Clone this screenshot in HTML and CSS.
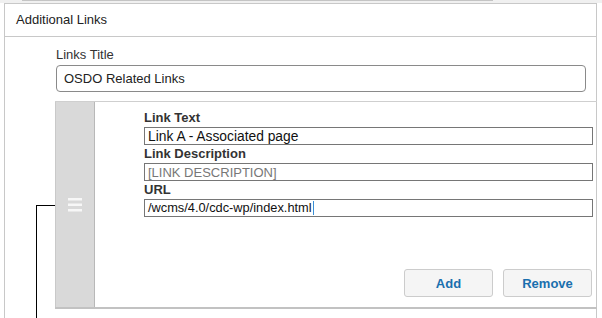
FILE: index.html
```html
<!DOCTYPE html>
<html>
<head>
<meta charset="utf-8">
<link rel="stylesheet" href="styles.css">
</head>
<body>
<div class="top-strip"><div class="top-line"></div></div>
<div class="panel">
  <div class="panel-header">Additional Links</div>
  <div class="panel-body">
    <div class="field-label">Links Title</div>
    <input class="title-input" type="text" value="OSDO Related Links">
    <div class="item">
      <div class="connector"></div>
      <div class="handle">
        <svg width="14" height="14" viewBox="0 0 14 14"><rect x="0" y="0" width="14" height="2.5" fill="#f7f7f7"/><rect x="0" y="5.5" width="14" height="2.5" fill="#f7f7f7"/><rect x="0" y="11" width="14" height="2.5" fill="#f7f7f7"/></svg>
      </div>
      <div class="item-body">
        <div class="item-label">Link Text</div>
        <input class="item-input big" type="text" value="Link A - Associated page">
        <div class="item-label">Link Description</div>
        <input class="item-input" type="text" placeholder="[LINK DESCRIPTION]">
        <div class="item-label">URL</div>
        <div class="item-input url">/wcms/4.0/cdc-wp/index.html<span class="caret"></span></div>
        <div class="actions">
          <button class="btn">Add</button>
          <button class="btn">Remove</button>
        </div>
      </div>
    </div>
  </div>
</div>
</body>
</html>
```

FILE: styles.css
```css
html, body {
  margin: 0;
  padding: 0;
  height: 318px;
  overflow: hidden;
  background: #fff;
  font-family: "Liberation Sans", Arial, sans-serif;
  font-size: 13px;
  color: #222;
}

.top-strip {
  height: 3px;
  background: #f0f0f0;
}

.top-line {
  margin-left: 22px;
  width: 471px;
  height: 1px;
  background: #c4c4c4;
}

.panel {
  margin-left: 4px;
  width: 593px;
  box-sizing: border-box;
  border: 1px solid #c8c8c8;
  border-bottom: none;
  height: 330px;
}

.panel-header {
  height: 32px;
  line-height: 31px;
  padding-left: 11px;
  border-bottom: 1px solid #c8c8c8;
  color: #222;
  font-size: 13px;
}

.panel-body {
  padding: 10px 0 0 51px;
}

.field-label {
  line-height: 16px;
  height: 16px;
  color: #333;
}

.title-input {
  display: block;
  margin-top: 2px;
  width: 530px;
  height: 27px;
  box-sizing: border-box;
  border: 1px solid #8a8a8a;
  border-radius: 4px;
  padding: 0 7px;
  font-family: "Liberation Sans", Arial, sans-serif;
  font-size: 13px;
  color: #222;
  outline: none;
}

.item {
  position: relative;
  display: flex;
  margin-top: 9px;
  margin-left: -1px;
  width: 542px;
  height: 205px;
  border-top: 1px solid #cfcfcf;
  box-shadow: 0 2px 0 #c2c2c2;
}

.connector {
  position: absolute;
  left: -19px;
  top: 103px;
  width: 18px;
  height: 120px;
  border-left: 1px solid #000;
  border-top: 1px solid #000;
}

.handle {
  width: 38px;
  flex: none;
  background: #d9d9d9;
  border-left: 1px solid #c9c9c9;
  border-right: 1px solid #b8b8b8;
  display: flex;
  align-items: center;
  justify-content: center;
}

.item-body {
  flex: 1;
  padding: 7px 4px 10px 49px;
  display: flex;
  flex-direction: column;
}

.item-label {
  font-weight: bold;
  line-height: 18px;
  height: 18px;
  color: #333;
  font-size: 13px;
}

.item-input {
  display: block;
  height: 18px;
  box-sizing: border-box;
  border: 1px solid #767676;
  padding: 0 3px;
  margin: 0;
  font-family: "Liberation Sans", Arial, sans-serif;
  font-size: 13px;
  line-height: 16px;
  color: #111;
  outline: none;
  width: 449px;
}

.item-input.big {
  font-size: 13.8px;
}

.item-input::placeholder {
  color: #777;
}

.url {
  white-space: nowrap;
  font-size: 12.8px;
}

.caret {
  display: inline-block;
  width: 1px;
  height: 14px;
  background: #3a8fd6;
  vertical-align: -3px;
  margin-left: 1px;
}

.actions {
  margin-top: auto;
  display: flex;
  justify-content: flex-end;
  gap: 10px;
  padding-right: 1px;
}

.btn {
  width: 89px;
  height: 28px;
  box-sizing: border-box;
  border: 1px solid #cccccc;
  border-radius: 3px;
  background: #f5f5f5;
  color: #1a6fae;
  font-family: "Liberation Sans", Arial, sans-serif;
  font-size: 13px;
  font-weight: bold;
  padding: 0;
}
```
